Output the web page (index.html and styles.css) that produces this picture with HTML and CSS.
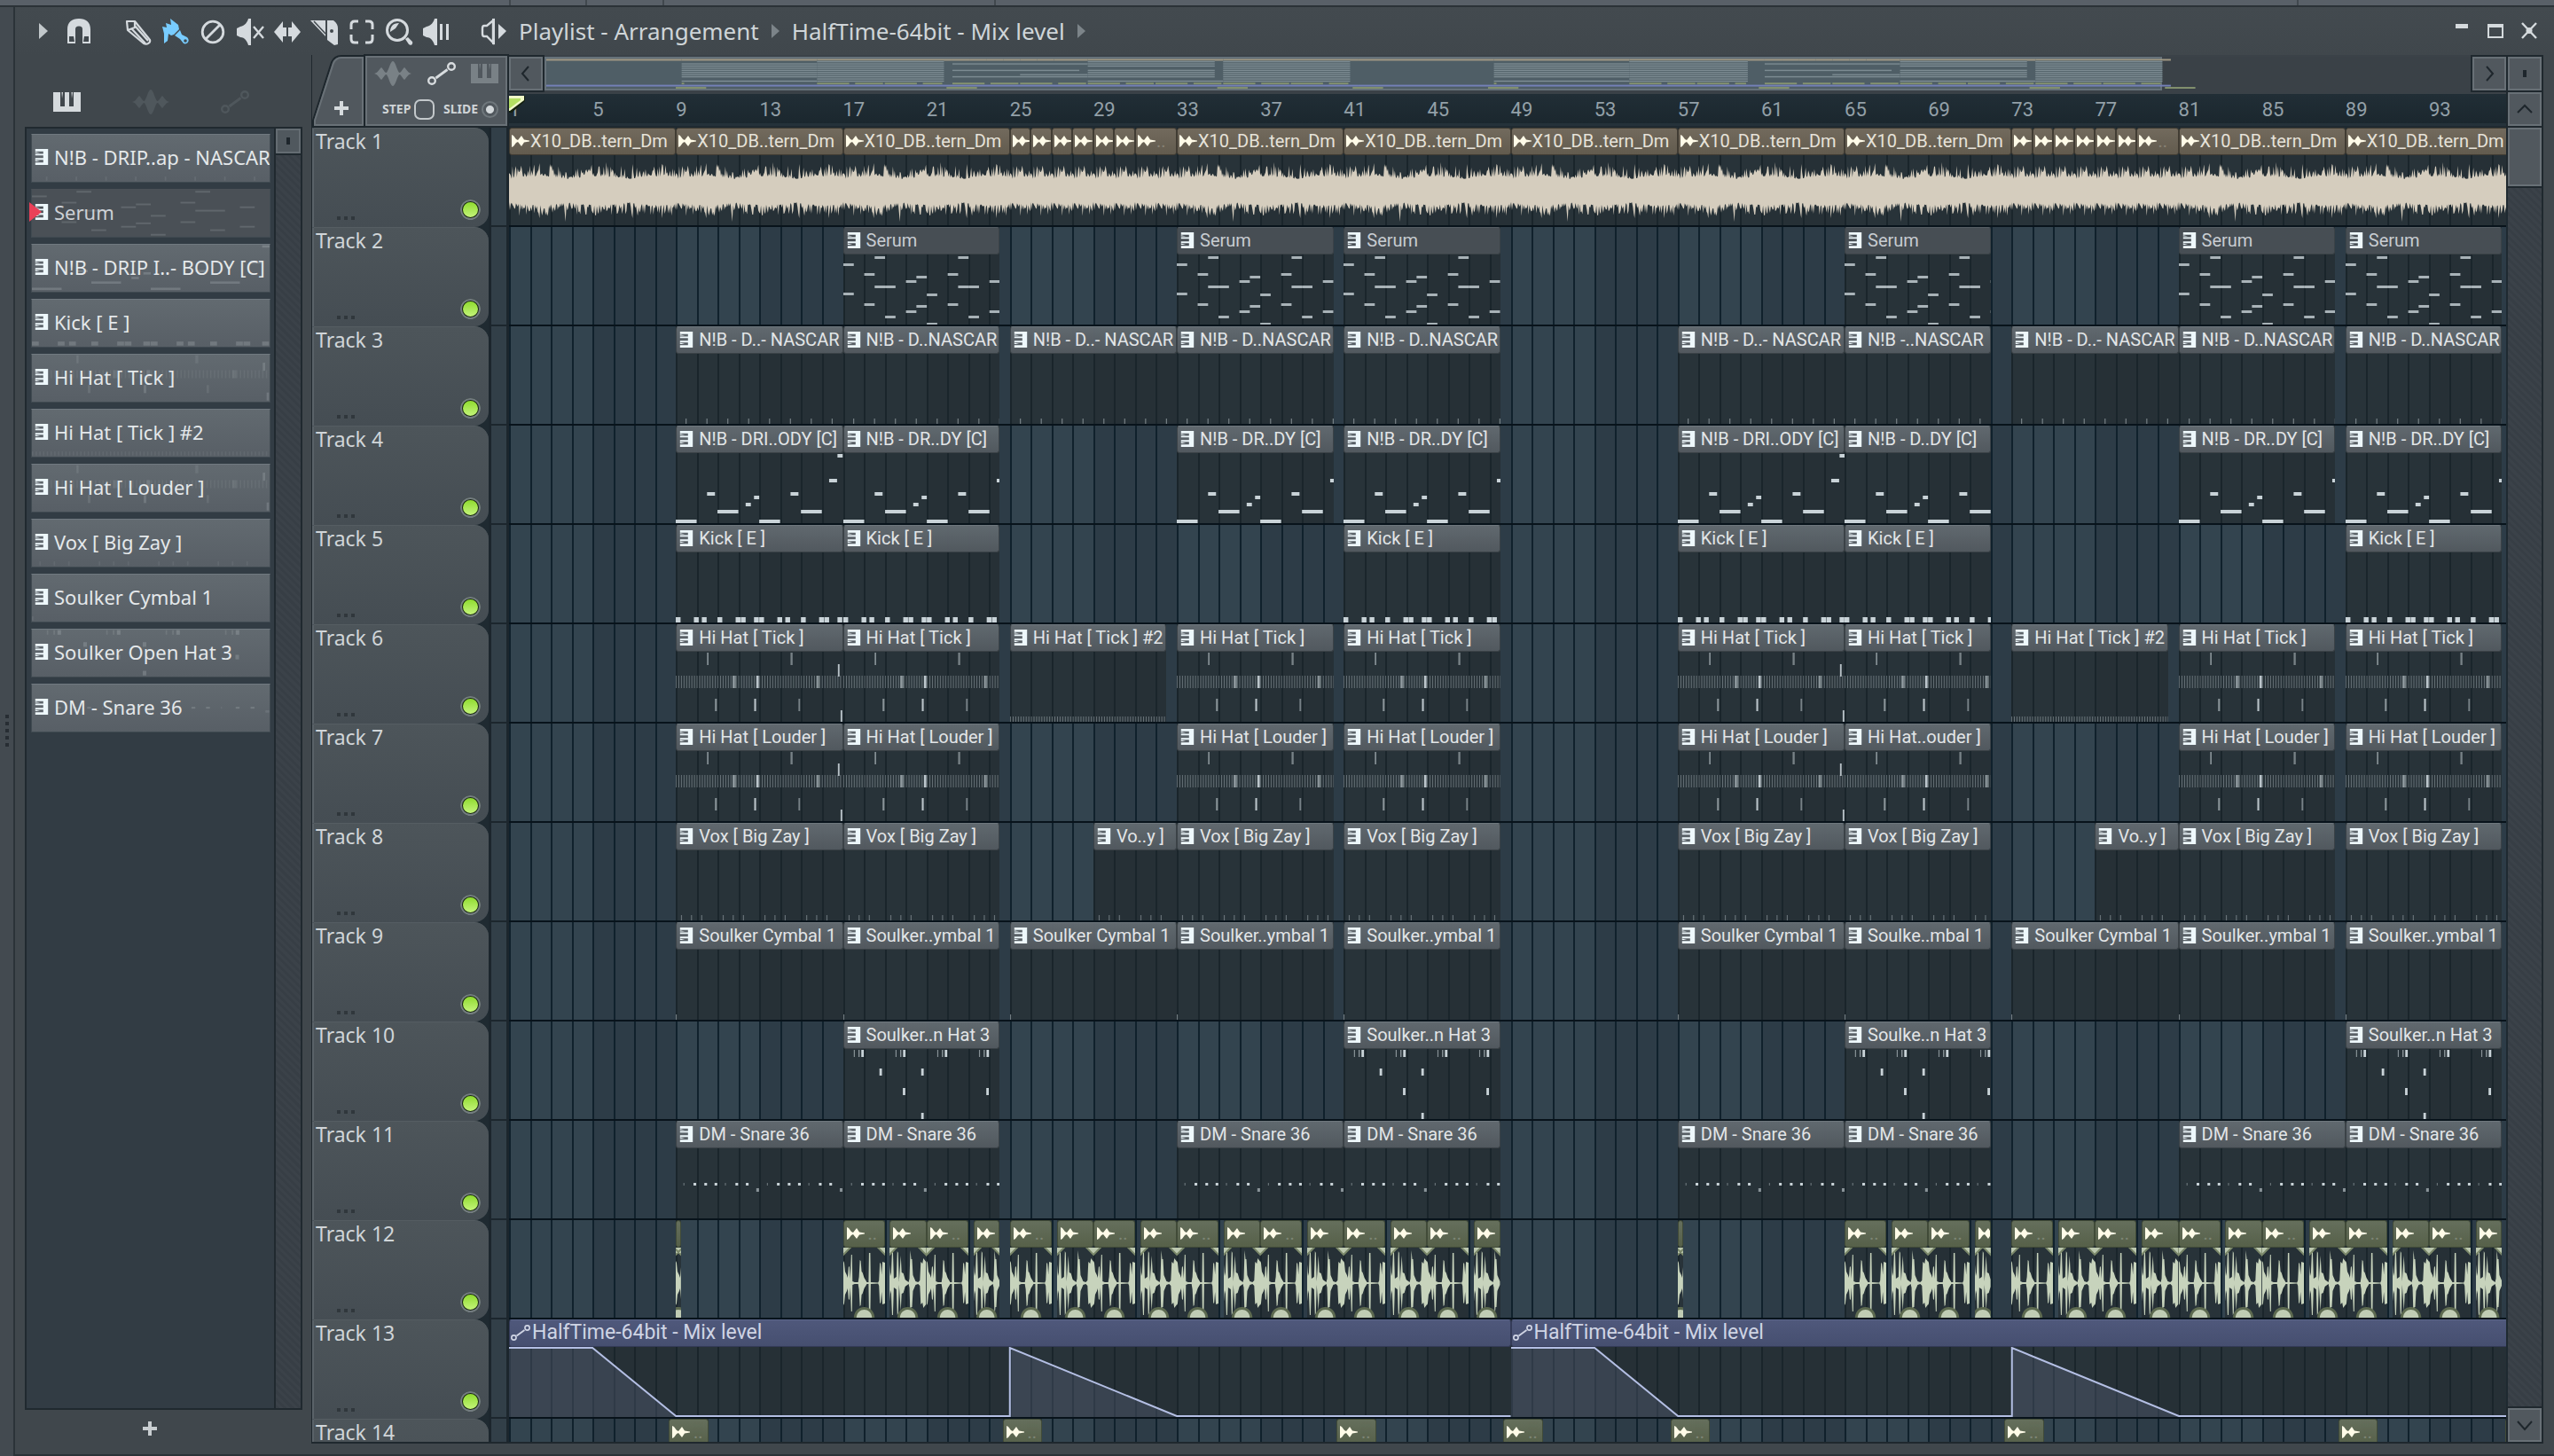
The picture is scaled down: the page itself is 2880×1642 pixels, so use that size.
FILE: index.html
```html
<!DOCTYPE html>
<html lang="en">
<head>
<meta charset="utf-8">
<title>Playlist - Arrangement</title>
<link rel="stylesheet" href="styles.css">
</head>
<body>
<svg class="defs" aria-hidden="true">
  <symbol id="i-piano" viewBox="0 0 31 22"><path fill="currentColor" d="M0 0H8V16H13V0H18V16H23V0H31V22H0Z"/><path fill="currentColor" d="M9.500 0H11L10 7ZM20.500 0H22L21 7Z"/></symbol>
  <symbol id="i-wave" viewBox="0 0 42 28"><path fill="currentColor" d="M0 14C4 13 5 10 8 7C11 10 12 13 13.500 13C16 12 18 0 21 0S26 12 28.500 13C30 13 31 10 34 7C37 10 38 13 42 14C38 15 37 18 34 21C31 18 30 15 28.500 15C26 16 24 28 21 28S16 16 13.500 15C12 15 11 18 8 21C5 18 4 15 0 14Z"/></symbol>
  <symbol id="i-auto" viewBox="0 0 32 26"><g fill="none" stroke="currentColor"><circle cx="5" cy="21" r="3.800" stroke-width="2.400"/><circle cx="27" cy="5" r="3.800" stroke-width="2.400"/><path d="M9.500 18L22.500 8.500" stroke-width="2.800"/></g></symbol>
  <symbol id="i-clip" viewBox="0 0 16 20"><path fill="currentColor" d="M0 0H16V20H0V17H10V13.500H0V11.500H10V8H0V6H10V3H0Z"/><path fill="currentColor" d="M0 3.500L6 5H0ZM0 14L6 15.500H0Z"/></symbol>
  <symbol id="i-audio" viewBox="0 0 20 16"><path fill="currentColor" d="M0 1L2 2L5 6L7 7L11 2L14 6.500L20 7.500V8.500L14 9.500L11 14L7 9L5 10L2 14L0 15Z"/></symbol>
</svg>

<div class="host-bar"><i></i><i></i><i></i><i></i><i></i></div>

<div class="window">
  <div class="dock"><i></i><i></i><i></i><i></i><i></i></div>

  <div class="main">
    <header class="titlebar">
      <button class="tool tool-menu" aria-label="Menu"><svg viewBox="0 0 10 32"><path fill="currentColor" d="M0 7L10 16L0 25Z"/></svg></button>
      <button class="tool tool-magnet" aria-label="Snap"><svg viewBox="0 0 32 32"><path fill="currentColor" d="M3 30V14C3 6 8 2 16 2S29 6 29 14V30H20V14C20 12 19 10.500 16 10.500S12 12 12 14V30Z"/><path fill="#41484d" d="M5 22H10L11 28H5ZM22 22H27V28H21Z"/></svg></button>
      <button class="tool" aria-label="Draw"><svg viewBox="0 0 32 32"><g fill="none" stroke="currentColor" stroke-width="2.200" stroke-linejoin="round"><path d="M3 5L12 5L29 26C30 29 26 32 22 30L4 15Z"/><path d="M4 15L12 12V5M8 13L24 30M12 10L27 27"/></g></svg></button>
      <button class="tool tool-active" aria-label="Paint"><svg viewBox="0 0 32 32"><path fill="currentColor" d="M1 11L6 12L5 7L11 9L10 2L19 9L20 14L14 20L11 21L8 19L7 27L3 30V19Z"/><path fill="currentColor" d="M15 21L21 15L23 20L29 23C33 27 29 32 25 30L21 25Z"/><circle cx="27" cy="27" r="1.800" fill="#41484d"/></svg></button>
      <button class="tool" aria-label="Delete"><svg viewBox="0 0 32 32"><g fill="none" stroke="currentColor" stroke-width="2.800"><circle cx="16" cy="17" r="11.800"/><path d="M8 25L24 9"/></g></svg></button>
      <button class="tool" aria-label="Mute"><svg viewBox="0 0 32 32"><path fill="currentColor" d="M1 13L5 11C10 10 13 6 14 2H17V32H14C13 28 10 23 5 23L1 21Z"/><path d="M20 11L31 24M31 11L20 24" stroke="currentColor" stroke-width="2.400"/></svg></button>
      <button class="tool" aria-label="Slip"><svg viewBox="0 0 32 32"><path fill="currentColor" d="M1 17L11 5V12H15V22H11V29ZM31 17L21 5V12H17V22H21V29Z"/></svg></button>
      <button class="tool" aria-label="Slice"><svg viewBox="0 0 32 32"><path fill="currentColor" d="M0 4H17V22ZM19 4H26C30 7 31 10 31 13V31L27 32L19 26Z"/><path d="M4 5L17 19" stroke="#41484d" stroke-width="1.500"/><circle cx="24" cy="16" r="2" fill="#41484d"/></svg></button>
      <button class="tool" aria-label="Select"><svg viewBox="0 0 32 32"><path fill="none" stroke="currentColor" stroke-width="3" d="M4 14V9Q4 5 8 5H12M20 5H24Q28 5 28 9V14M28 20V25Q28 29 24 29H20M12 29H8Q4 29 4 25V20"/></svg></button>
      <button class="tool" aria-label="Zoom"><svg viewBox="0 0 32 32"><circle cx="14" cy="15" r="11.500" fill="none" stroke="currentColor" stroke-width="3"/><path fill="currentColor" d="M6 17C6 11 9 7 16 7L12 13ZM23 25L26 23L31 28C32 31 29 33 27 31Z"/></svg></button>
      <button class="tool" aria-label="Playback"><svg viewBox="0 0 32 32"><path fill="currentColor" d="M1 13L5 11C10 10 13 6 14 2H17V32H14C13 28 10 23 5 23L1 21ZM20 8H23V26H20ZM27 8H30V26H27Z"/></svg></button>
      <button class="tool tool-speaker" aria-label="Audition"><svg viewBox="0 0 32 32"><path fill="none" stroke="currentColor" stroke-width="2.400" d="M8 10H5Q3 10 3 13V19Q3 22 5 22H8L15 29V4Z"/><path fill="currentColor" d="M14 2H17V31H14ZM21 8L30 16L21 25Z"/></svg></button>
      <nav class="crumbs">
        <a href="#">Playlist - Arrangement</a><i class="tri"></i>
        <a href="#">HalfTime-64bit - Mix level</a><i class="tri"></i>
      </nav>
      <div class="controls">
        <button aria-label="Minimise"><svg viewBox="0 0 20 20"><path d="M3 2H17V7H3Z" fill="currentColor"/></svg></button>
        <button aria-label="Maximise"><svg viewBox="0 0 20 20"><path d="M1 2H19V18H1ZM3 6V16H17V6Z" fill="currentColor" fill-rule="evenodd"/></svg></button>
        <button aria-label="Close"><svg viewBox="0 0 20 20"><path d="M2 1L18 18M18 1L2 18" stroke="currentColor" stroke-width="2.400"/><circle cx="10" cy="9.500" r="3.500" fill="currentColor"/></svg></button>
      </div>
    </header>

    <div class="content">
      <aside class="picker">
        <div class="picker-tabs">
          <button aria-label="Patterns" class="on"><svg width="31" height="22"><use href="#i-piano"/></svg></button>
          <button aria-label="Audio"><svg width="42" height="28"><use href="#i-wave"/></svg></button>
          <button aria-label="Automation"><svg width="32" height="26"><use href="#i-auto"/></svg></button>
        </div>
        <div class="picker-box">
          <ul class="patterns">
            <li><button data-p="nascar">N!B - DRIP..ap - NASCAR</button></li>
            <li class="selected"><button data-p="serum">Serum</button></li>
            <li><button data-p="body">N!B - DRIP I..- BODY [C]</button></li>
            <li><button data-p="kick">Kick [ E ]</button></li>
            <li><button data-p="hat">Hi Hat [ Tick ]</button></li>
            <li><button data-p="hat2">Hi Hat [ Tick ] #2</button></li>
            <li><button data-p="hat">Hi Hat [ Louder ]</button></li>
            <li><button data-p="vox">Vox [ Big Zay ]</button></li>
            <li><button data-p="cymbal">Soulker Cymbal 1</button></li>
            <li><button data-p="openhat">Soulker Open Hat 3</button></li>
            <li><button data-p="snare">DM - Snare 36</button></li>
          </ul>
          <div class="scroll scroll-list"><button aria-label="Scroll menu"><b></b></button></div>
        </div>
        <button class="add-pattern" aria-label="Add pattern"><svg viewBox="0 0 16 16"><path d="M6 0H10V6H16V10H10V16H6V10H0V6H6Z" fill="currentColor"/></svg></button>
      </aside>

      <section class="arranger">
        <div class="arranger-head">
          <div class="head-left">
            <button class="add-track" aria-label="Add track">
              <svg class="tab-shape" viewBox="0 0 60 80" preserveAspectRatio="none"><path d="M1 79V72L22 8Q25 1 33 1H59V79Z" fill="#51585e" stroke="#1d262c" stroke-width="2"/><path d="M3 77V72L24 9Q27 3 33 3H57V77Z" fill="none" stroke="#697177" stroke-width="2"/></svg>
              <svg class="plus" viewBox="0 0 16 16"><path d="M6 0H10V6H16V10H10V16H6V10H0V6H6Z" fill="currentColor"/></svg>
            </button>
            <div class="focus">
              <div class="focus-icons">
                <button aria-label="Focus audio"><svg width="42" height="28"><use href="#i-wave"/></svg></button>
                <button aria-label="Focus automation" class="on"><svg width="32" height="26"><use href="#i-auto"/></svg></button>
                <button aria-label="Focus patterns"><svg width="31" height="22"><use href="#i-piano"/></svg></button>
              </div>
              <div class="focus-opts">
                <label>STEP<input type="checkbox"></label>
                <label>SLIDE<input type="radio" checked></label>
              </div>
            </div>
          </div>
          <div class="head-right">
            <div class="overview">
              <button class="nav" aria-label="Scroll left"><svg viewBox="0 0 20 20"><path d="M13 2L6 10L13 18" fill="none" stroke="currentColor" stroke-width="2"/></svg></button>
              <div class="map"><div class="viewport"><svg id="map" preserveAspectRatio="none"></svg></div></div>
              <button class="nav" aria-label="Scroll right"><svg viewBox="0 0 20 20"><path d="M7 2L14 10L7 18" fill="none" stroke="currentColor" stroke-width="2"/></svg></button>
            </div>
            <div class="ruler" id="ruler"></div>
          </div>
          <div class="head-corner">
            <button class="nav" aria-label="Zoom"><b></b></button>
            <button class="nav" aria-label="Scroll up"><svg viewBox="0 0 20 20"><path d="M2 14L10 6L18 14" fill="none" stroke="currentColor" stroke-width="2"/></svg></button>
          </div>
        </div>
        <div class="arranger-body">
          <div class="tracks" id="tracks"></div>
          <div class="scroll scroll-tracks">
            <div class="thumb"></div>
            <button class="nav" aria-label="Scroll down"><svg viewBox="0 0 20 20"><path d="M2 6L10 15L18 6" fill="none" stroke="currentColor" stroke-width="2"/></svg></button>
          </div>
        </div>
      </section>
    </div>
  </div>
</div>
<script src="script.js"></script>
</body>
</html>
```
FILE: styles.css
```css
* { box-sizing: border-box; }
body {
  margin: 0;
  height: 100vh;
  display: flex;
  flex-direction: column;
  overflow: hidden;
  background: #40474c;
  color: #d5dadd;
  font-family: "Noto Sans", sans-serif;
  font-size: 22px;
}
button { margin: 0; padding: 0; border: 0; background: none; color: inherit; font: inherit; }
a { color: inherit; text-decoration: none; }
ul { margin: 0; padding: 0; list-style: none; }
svg { display: block; }
.defs { position: absolute; width: 0; height: 0; }

.host-bar {
  flex: none;
  height: 8px;
  display: grid;
  grid-template-columns: 20fr 3fr 3fr 13fr 51fr 10fr;
  background: #596068;
  border-bottom: 2px solid #2b3237;
}
.host-bar i { border-right: 2px solid #41484e; }

.window { flex: 1; min-height: 0; display: flex; }
.dock {
  flex: none;
  width: 17px;
  padding: 798px 0 0 6px;
  display: flex;
  flex-direction: column;
  gap: 4px;
  background: #434a50;
  border-right: 2px solid #2b3338;
}
.dock i { width: 4px; height: 4px; background: #272d33; }
.main {
  flex: 1;
  min-width: 0;
  display: flex;
  flex-direction: column;
  border-bottom: 2px solid #2b3237;
}

.titlebar {
  flex: none;
  height: 54px;
  display: flex;
  align-items: center;
  gap: 10px;
  padding: 0 18px 0 27px;
  background: linear-gradient(#434a4f, #40474c);
}
.tool { flex: none; width: 32px; height: 32px; color: #d5dade; }
.tool svg { width: 100%; height: 100%; }
.tool-menu { width: 10px; margin-right: 9px; color: #c2c8cb; }
.tool-magnet { margin-right: 25px; }
.tool-active { color: #78ccff; }
.tool-speaker { margin-left: 23px; }
.crumbs { display: flex; align-items: center; gap: 14px; margin-left: 2px; font-size: 26px; color: #cfd5d8; white-space: nowrap; }
.tri { border: 8px solid transparent; border-left: 9px solid #7c8489; border-right: 0; }
.controls { display: flex; gap: 18px; margin-left: auto; }
.controls button { width: 20px; height: 20px; }

.content { flex: 1; min-height: 0; display: flex; padding: 0 12px 12px 11px; }

.picker { flex: none; width: 313px; display: flex; flex-direction: column; }
.picker-tabs { flex: none; height: 81px; display: flex; align-items: end; gap: 58px; padding: 0 0 14px 32px; color: #4f575c; }
.picker-tabs button { height: 28px; display: flex; align-items: center; }
.picker-tabs .on { color: #d5dadd; }
.picker-box {
  flex: 1;
  min-height: 0;
  display: flex;
  background: #323c44;
  border: 2px solid #20292f;
}
.patterns { flex: 1; min-width: 0; padding: 6px 4px 0 5px; }
.patterns li { position: relative; margin-bottom: 7px; }
.patterns button {
  position: relative;
  display: flex;
  align-items: center;
  gap: 6px;
  width: 100%;
  height: 55px;
  padding: 0 0 3px 3px;
  border: 1px solid #404a51;
  border-top-color: #707980;
  background: linear-gradient(#626a70, #585f66);
  color: #e4e8ea;
  font-size: 22px;
  white-space: nowrap;
  overflow: hidden;
}
.patterns span { position: relative; }
.patterns .selected button { background: #4a5056; color: #cdd1d5; border-top-color: #4a5056; }
.patterns .selected::before {
  content: "";
  position: absolute;
  z-index: 1;
  left: -2px;
  top: 15px;
  border: 11px solid transparent;
  border-left: 14px solid #ea4058;
  border-right: 0;
}
.preview { position: absolute; inset: 0; width: 100%; height: 100%; opacity: .2; }
.clip-icon { position: relative; flex: none; width: 16px; height: 18px; color: #eef8fc; }

.scroll { flex: none; background: repeating-linear-gradient(45deg, #373e45 0 3px, #3b4249 3px 6px); }
.scroll-list { width: 30px; border-left: 2px solid #20292f; }
.scroll-list button { width: 28px; height: 28px; display: grid; place-items: center; border: 2px solid #646c72; background: #50585e; outline: 2px solid #20292f; }
.scroll-list b, .nav b { width: 4px; height: 8px; background: #1e262c; }
.add-pattern { flex: none; height: 38px; padding-top: 4px; margin-right: 32px; display: grid; place-items: center; color: #c8cdd0; }
.add-pattern svg { width: 16px; height: 16px; }

.arranger { flex: 1; min-width: 0; display: flex; flex-direction: column; margin-left: 10px; border: 2px solid #1f282e; border-width: 0 2px 2px 1px; }
.arranger-head { flex: none; height: 82px; display: flex; gap: 2px; background: #1f2a31; }
.head-left { flex: none; width: 220px; display: flex; background: #40474c; }
.add-track { position: relative; width: 60px; padding: 38px 0 0 25px; }
.tab-shape { position: absolute; left: 0; top: 0; width: 60px; height: 82px; }
.plus { position: relative; width: 16px; height: 16px; }
.focus {
  flex: 1;
  margin: 1px 0 2px;
  padding: 4px 8px 2px;
  background: #51585e;
  border: 2px solid #697177;
  outline: 2px solid #1f282e;
  display: flex;
  flex-direction: column;
  gap: 14px;
}
.focus-icons { display: flex; align-items: center; justify-content: space-between; color: #798186; }
.focus-icons .on { color: #d8dcdf; }
.focus-opts { display: flex; justify-content: space-between; padding-left: 9px; font: bold 14px/24px "Noto Sans", sans-serif; color: #cfd4d7; }
.focus-opts label { display: flex; align-items: center; gap: 4px; }
.focus-opts input { appearance: none; margin: 0; width: 23px; height: 23px; border: 2px solid #c3c8cb; border-radius: 7px; }
.focus-opts input[type="radio"] { width: 19px; height: 19px; border-color: #6f777c; border-radius: 50%; background: radial-gradient(#d3d8db 0 4px, transparent 5px); }

.head-right { flex: 1; min-width: 0; }
.overview { height: 44px; display: flex; gap: 2px; padding-top: 2px; background: #3b4248; }
.nav { flex: none; width: 38px; height: 38px; display: grid; place-items: center; color: #1e262c; background: #51585e; border: 2px solid #687076; outline: 2px solid #1f282e; }
.nav svg { width: 20px; height: 20px; }
.map { flex: 1; background: #3a4147; }
.viewport { width: 84%; height: 38px; border: 2px solid #66727a; background: #4f5e66; }
.viewport svg { width: 100%; height: 100%; overflow: visible; }
.ruler { position: relative; height: 36px; background: linear-gradient(#212e36, #1b272e); border-bottom: 3px solid #25323a; color: #93a0a8; }
.ruler span { position: absolute; top: 4px; font: 22px/28px Roboto, sans-serif; }
.ruler svg { position: absolute; left: 0; top: 1px; width: 20px; height: 22px; }
.head-corner { flex: none; width: 38px; padding-top: 2px; display: flex; flex-direction: column; gap: 2px; }

.arranger-body { flex: 1; min-height: 0; display: flex; gap: 2px; background: #1f2a31; }
.tracks { flex: 1; min-width: 0; overflow: hidden; }
.scroll-tracks { width: 38px; display: flex; flex-direction: column; justify-content: space-between; }
.thumb { height: 66px; background: #51585e; border: 2px solid #687076; outline: 2px solid #1f282e; }

.track { display: flex; height: 112px; }
.track-head {
  flex: none;
  position: relative;
  width: 199px;
  padding: 0 2px;
  color: #d0d5d8;
  font-size: 23px;
  line-height: 28px;
  background: linear-gradient(#4d555a, #454d53);
  border-top: 1px solid #555d62;
  border-radius: 0 16px 16px 0;
  border-left: 2px solid #5a6268;
}
.dots { position: absolute; left: 26px; bottom: 8px; width: 20px; height: 4px; background: repeating-linear-gradient(90deg, #30373c 0 4px, transparent 4px 8px); }
.led {
  appearance: none;
  position: absolute;
  right: 9px;
  bottom: 8px;
  margin: 0;
  width: 23px;
  height: 23px;
  border: 3px solid #17250f;
  outline: 2px solid #737c80;
  outline-offset: -2px;
  border-radius: 50%;
  background: linear-gradient(#8fdb2f, #c4f47a);
}
.gutter { flex: none; width: 23px; border: solid #1c262d; border-width: 0 3px 2px 3px; background: #323f48; }
.lane {
  --bar: calc(100% / 95.7);
  flex: 1;
  position: relative;
  overflow: hidden;
  border-bottom: 2px solid #08131b;
  background:
    repeating-linear-gradient(90deg, #10212c 0 2px, transparent 2px var(--bar)),
    repeating-linear-gradient(90deg, #33444f 0 calc(4 * var(--bar)), #2d3c47 0 calc(8 * var(--bar)));
}
.clip { position: absolute; top: 0; bottom: 0; background: rgba(34, 40, 44, .6); overflow: hidden; }
.clip-title {
  display: flex;
  align-items: center;
  gap: 6px;
  height: 31px;
  padding: 0 0 2px 3px;
  border: 1px solid #3b4247;
  border-top-color: #6e777d;
  border-radius: 3px;
  background: linear-gradient(rgba(99, 107, 113, .96), rgba(83, 90, 96, .96));
  color: #e2e5e7;
  font: 20px/28px Roboto, sans-serif;
  white-space: nowrap;
  overflow: hidden;
}
.clip-title svg { flex: none; }
.clip-body { position: absolute; left: 0; top: 31px; width: 100%; height: 79px; }
.clip.serum .clip-title { background: #474e54; border-top-color: #555d63; color: #c7ccd1; }
.clip.audio .clip-title { padding-left: 2px; gap: 1px; background: linear-gradient(#726a5d, #625b4e); border-color: #413c33; color: #e6e2d9; }
.clip.chop .clip-title { gap: 4px; background: linear-gradient(#656f5c, #566049); border-color: #414b38; }
.clip.mix .clip-title { padding-left: 1px; gap: 2px; background: linear-gradient(#4f587b, #464f70); border-color: #343b58; border-top-color: #5c668b; color: #cfd4e4; font-size: 23px; }
.clip .faint { opacity: .25; }
.clip .audio-icon { width: 20px; height: 16px; color: #fffbe8; }
```
FILE: script.js
```js
const BARS = 95.7;
const pct = v => (v / BARS * 100) + '%';
const rep = (n, f) => Array.from({ length: n }, (_, i) => f(i)).flat();

// Notes: [start bar, length in bars, top, height, opacity]; tops count from the top of the track.
const hatHits = [
  ...rep(64, i => [[i / 8, .045, 58, 14, .38]]),
  [1.5, .07, 32, 14, .6], [5.5, .1, 32, 14, .5], [7.77, .08, 45, 14, .9],
  [2.72, .16, 58, 14, .5], [3.86, .12, 58, 14, .9], [6.74, .14, 58, 14, .5],
  [1.88, .09, 84, 14, .6], [3.76, .09, 84, 14, .9], [5.88, .08, 84, 14, .5], [7.9, .08, 97, 14, .9]
];
const notes = {
  nascar: rep(8, i => [[i + .47, .05, 104, 7, .5]]),
  serum: [[0,42],[0,75],[1,53],[1,87],[1.5,34],[1.5,67],[2,67],[2,101],[3,61],[3,95],[3.5,56],[3.5,89],[4,76],[4,109],
    [5,53],[5,87],[5.5,34],[5.5,67],[6,67],[6,101],[7,61],[7,95]].map(([x, y]) => [x, .5, y - 1, 3, .8]),
  body: [[0,1,108],[1.5,.38,77],[2,1,97],[3.35,.25,89],[3.75,.25,81],[4,1,108],[5.5,.38,77],[6,1,97],[7.35,.38,62],[7.75,.25,34]]
    .map(([x, w, y]) => [x, w, y - 2, 4, 1]),
  kick: [0,.87,1.25,2,2.87,3.12,3.75,4,4.87,5.25,6,6.87,7.12,7.75].map(x => [x, .23, 104, 7, 1]),
  hat: hatHits,
  hat2: rep(64, i => [[i / 8, .045, 104, 7, .4]]),
  vox: rep(4, i => [.25, .73, 1.22].map(x => [i * 2 + x, .05, 104, 7, .4])),
  cymbal: [[0, .05, 104, 7, .5]],
  openhat: [...rep(4, i => [[i * 2 + .5, .05, 32, 8, .6], [i * 2 + .72, .06, 32, 8, .6], [i * 2 + .86, .12, 32, 8, 1]]),
    [1.73, .12, 53, 8, 1], [3.73, .12, 53, 8, 1], [2.85, .12, 75, 8, 1], [6.85, .12, 75, 8, 1], [3.73, .12, 103, 8, 1]],
  snare: rep(2, i => [[.37,.04,.5],[.85,.13,1],[1.37,.13,1],[1.86,.13,1],[2.36,.04,.5],[2.86,.13,1],[3.36,.13,1]]
    .map(([x, w, o]) => [i * 4 + x, w, 70, 3, o]).concat([[i * 4 + 3.86, .13, 76, 4, .6]]))
};

const rects = list => list.map(([x, w, y, h, o]) =>
  `<rect x="${(x * 24).toFixed(2)}" y="${y}" width="${w * 24}" height="${h}" opacity="${o}"/>`).join('');

// Deterministic noise, so that every loop of the sample looks the same.
const noise = i => { const s = Math.sin(i * 127.1 + 11.7) * 43758.5453; return s - Math.floor(s); };

function loopWave(len) {
  const peaks = { 35: [32, 30], 47: [31, 20], 65: [22, 34], 112: [33, 22], 142: [31, 30], 176: [31, 30] };
  let top = '', bottom = '';
  const n = Math.round(len * 24);
  for (let i = -1; i <= n + 1; i++) {
    const k = len < 8 ? (i + 24) % 24 : (i + n) % n;
    const swell = 3 * Math.abs(Math.sin(k / 22));
    let up = 14 + Math.pow(noise(k), 2.2) * 14 + swell;
    let down = 12 + Math.pow(noise(k + 900), 2.2) * 14 + swell;
    if (len === 8 && peaks[i]) [up, down] = peaks[i];
    top += `L${i} ${(41 - up).toFixed(1)}`;
    bottom = `L${i} ${(41 + down).toFixed(1)}` + bottom;
  }
  return `<path fill="#d5cdbe" d="M-1 41${top}${bottom}Z"/>`;
}

const hitA = [[0,25],[1,23],[2,13],[3,11],[4,9],[5,6],[6,18],[7,19],[8,5],[9,32],[10,32],[10.5,2],[13,1],[17,1],[18,7],[19,26],[20,25],[21,13],[22,12],[24,6],[27,1],[29,1],[29.5,34],[31,34],[31.5,1],[40,.6],[41,3],[42,23],[43,22],[44,10],[45,24],[48,23]];
const hitB = [[0,21],[1,8],[2,12],[3,36],[4,36],[5,5],[8,7],[9,36],[10,34],[11,2],[13,31],[14,12],[16,11],[18,4],[22,1],[23,5],[24,37],[25,27],[26,27],[27,9],[30,2],[33,1],[35,3],[36,24],[38,22],[39,28],[42,24]];
function chopWave(len) {
  const w = len * 24;
  const env = (len === 2 || len === .25 || len === 1.9 ? hitA : hitB).filter(p => p[0] <= w);
  const d = 'M0 40' + env.map(([x, a]) => `L${x} ${40 - a}`).join('') + env.slice().reverse().map(([x, a]) => `L${x} ${40 + a}`).join('') + 'Z';
  const m = w / 2;
  let s = `<path fill="#c7d3bc" d="${d}M0 39.500H${w}V40.500H0Z"/>`;
  s += `<path fill="#bcc8af" stroke="#7a8769" stroke-width="2" d="M-1 -1H9L-1 9ZM${w - 9} -1H${w + 1}V9Z"/>`;
  return s + `<path fill="#5d6a50" d="M${m - 12} 79C${m - 11} 63 ${m + 11} 63 ${m + 12} 79Z"/><path fill="#c0ccb4" d="M${m - 9} 79C${m - 8} 67 ${m + 8} 67 ${m + 9} 79Z"/>`;
}

function mixCurve(w) {
  const pts = `0,1 96,1 192,78 576,78 576,1 768,78 ${w},78`;
  return `<polygon points="0,79 ${pts} ${w},79" fill="#8892b8" opacity=".2"/>` +
    `<polyline points="${pts}" fill="none" stroke="#b4bfe4" stroke-width="2" vector-effect="non-scaling-stroke"/>`;
}

// Clips: [start bar, length, title]
const same = (title, list) => list.map(([s, l, t]) => [s, l, t || title]);
const X = 'X10_DB..tern_Dm';
const small = s => [...[0, 1, 2, 3, 4, 5].map(i => [s + i, 1, ' ']), [s + 6, 2, '..']];
const chops = (s, end) => [[s, 2, '..'], [s + 2.25, 1.75, ' '], [s + 4, 2, '..'], [s + 6.25, end - 6.25, ' ']];
const S = 7.5;
const tracks = [
  ['audio', [...same(X, [[1,8],[9,8],[17,8]]), ...small(25), ...same(X, [[33,8],[41,8],[49,8],[57,8],[65,8]]), ...small(73), ...same(X, [[81,8],[89,8]])]],
  ['serum', same('Serum', [[17,S],[33,S],[41,S],[65,7],[81,S],[89,S]])],
  ['nascar', same('N!B - D..NASCAR', [[9,8,'N!B - D..- NASCAR'],[17,S],[25,8,'N!B - D..- NASCAR'],[33,S],[41,S],[57,8,'N!B - D..- NASCAR'],[65,7,'N!B -..NASCAR'],[73,8,'N!B - D..- NASCAR'],[81,S],[89,S]])],
  ['body', same('N!B - DR..DY [C]', [[9,8,'N!B - DRI..ODY [C]'],[17,S],[33,S],[41,S],[57,8,'N!B - DRI..ODY [C]'],[65,7,'N!B - D..DY [C]'],[81,S],[89,S]])],
  ['kick', same('Kick [ E ]', [[9,8],[17,S],[41,S],[57,8],[65,7],[89,S]])],
  ['hat', same('Hi Hat [ Tick ]', [[9,8],[17,S],[25,S,'Hi Hat [ Tick ] #2'],[33,S],[41,S],[57,8],[65,7],[73,S,'Hi Hat [ Tick ] #2'],[81,S],[89,S]])],
  ['hat', same('Hi Hat [ Louder ]', [[9,8],[17,S],[33,S],[41,S],[57,8],[65,7,'Hi Hat..ouder ]'],[81,S],[89,S]])],
  ['vox', same('Vox [ Big Zay ]', [[9,8],[17,S],[29,4,'Vo..y ]'],[33,S],[41,S],[57,8],[65,7],[77,4,'Vo..y ]'],[81,S],[89,S]])],
  ['cymbal', same('Soulker..ymbal 1', [[9,8,'Soulker Cymbal 1'],[17,S],[25,8,'Soulker Cymbal 1'],[33,S],[41,S],[57,8,'Soulker Cymbal 1'],[65,7,'Soulke..mbal 1'],[73,8,'Soulker Cymbal 1'],[81,S],[89,S]])],
  ['openhat', same('Soulker..n Hat 3', [[17,S],[41,S],[65,7,'Soulke..n Hat 3'],[89,S]])],
  ['snare', same('DM - Snare 36', [[9,8],[17,S],[33,8],[41,S],[57,8],[65,7],[81,8],[89,S]])],
  ['chop', [[9,.25,''], ...chops(17,S), ...chops(25,8), ...chops(33,8), ...chops(41,S), [57,.25,''], ...chops(65,7), ...chops(73,8), ...chops(81,8), ...chops(89,S)]],
  ['mix', [[1,48,'HalfTime-64bit - Mix level'],[49,48,'HalfTime-64bit - Mix level']]],
  ['chop', [8.65,24.65,40.65,48.65,56.65,72.65,88.65,96.65].map(s => [s, 1.9, s < 96 ? '..' : ''])]
];

const use = (id, cls) => `<svg class="${cls}"><use href="#${id}"/></svg>`;
const titleIcon = kind => kind === 'mix' ? '<svg width="22" height="20"><use href="#i-auto"/></svg>'
  : kind === 'audio' || kind === 'chop' ? use('i-audio', 'audio-icon') : use('i-clip', 'clip-icon');

function clipHtml(kind, [start, len, title]) {
  const w = len * 24;
  const picture = kind === 'audio' ? loopWave(len) : kind === 'chop' ? chopWave(len) : kind === 'mix' ? mixCurve(w)
    : `<g fill="#c9d3d8" transform="translate(0 -31)">${rects(notes[title.includes('#2') ? 'hat2' : kind])}</g>`;
  const text = title.trim() && `<span${title === '..' ? ' class="faint"' : ''}>${title}</span>`;
  return `<div class="clip ${kind}" style="left:${pct(start - 1)};width:${pct(len)}">` +
    `<div class="clip-title">${title ? titleIcon(kind) : ''}${text}</div>` +
    `<svg class="clip-body" viewBox="0 0 ${w} 79" preserveAspectRatio="none">${picture}</svg></div>`;
}

document.getElementById('tracks').innerHTML = tracks.map(([kind, clips], i) =>
  `<div class="track"><div class="track-head"><label for="t${i + 1}">Track ${i + 1}</label><i class="dots"></i>` +
  `<input class="led" type="checkbox" id="t${i + 1}" checked></div><div class="gutter"></div>` +
  `<div class="lane">${clips.map(c => clipHtml(kind, c)).join('')}</div></div>`).join('');

let marks = '';
for (let b = 1; b < BARS; b += 4) marks += `<span style="left:${pct(b - 1)}">${b}</span>`;
document.getElementById('ruler').innerHTML = marks +
  '<svg viewBox="0 0 20 22"><path d="M0 1H18V7L3 20H0Z" fill="#15200f"/><path d="M0 1H17V6L1 18H0Z" fill="#f0f8c8"/><path d="M0 4H13V6L1 15H0Z" fill="#b4df62"/></svg>';

const map = document.getElementById('map');
map.setAttribute('viewBox', '0 0 95.4 14');
const mapColor = { audio: '#a39a85', chop: '#84926f', mix: '#7480b8' };
map.innerHTML = tracks.map(([kind, clips], row) => clips.map(([s, l]) => {
  const c = mapColor[kind], x = s - 1, w = Math.min(l, 96.2 - x);
  return c ? `<rect x="${x}" y="${row + .2}" width="${kind === 'chop' ? l - .1 : w}" height=".8" fill="${c}"/>`
    : `<rect x="${x}" y="${row}" width="${l}" height="1" fill="#5a6970"/><rect x="${x}" y="${row + .3}" width="${l}" height=".4" fill="#84939a"/>`;
}).join('')).join('');

document.querySelectorAll('.patterns button').forEach(b => {
  const name = b.textContent;
  b.innerHTML = `<svg class="preview" viewBox="0 31 192 82" preserveAspectRatio="none"><g fill="#d5dde0">${rects(notes[b.dataset.p])}</g></svg>` +
    use('i-clip', 'clip-icon') + `<span>${name}</span>`;
});
```
